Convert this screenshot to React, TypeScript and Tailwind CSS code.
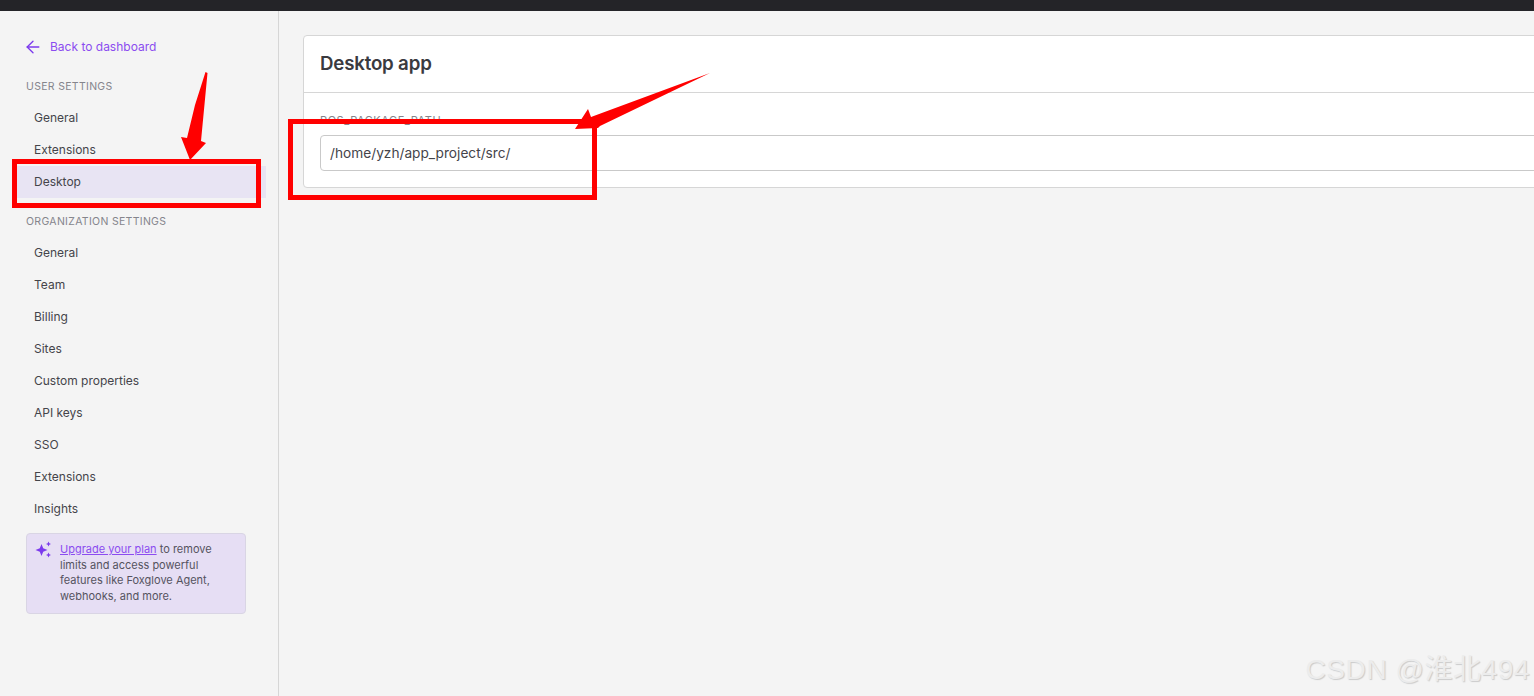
import React from "react";
import { ArrowLeft } from "lucide-react";

const userItems = ["General", "Extensions", "Desktop"];
const orgItems = ["General", "Team", "Billing", "Sites", "Custom properties", "API keys", "SSO", "Extensions", "Insights"];

const NavItem = ({ label, active }: { label: string; active?: boolean }) => (
  <div className={`h-8 flex items-center pl-5 text-[12px] text-[#44444a] ${active ? "bg-[#e8e4f3]" : ""}`}>{label}</div>
);

const SectionLabel = ({ label }: { label: string }) => (
  <div className="px-3 text-[10.5px] leading-4 tracking-[0.03em] uppercase text-[#85858c]">{label}</div>
);

const App = () => {
  return (
    <div className="relative h-screen overflow-hidden flex flex-col bg-[#f4f4f4] font-['Inter',sans-serif]">
      <div className="h-[11px] shrink-0 bg-[#242428]" />
      <div className="flex flex-1 min-h-0">
        <aside className="w-[279px] shrink-0 border-r border-[#d6d6d6] pl-[14px] pr-3 pt-[26px]">
          <div className="flex items-center gap-[7px] h-5 pl-[9px] text-[12px] text-[#8b4cf0]">
            <ArrowLeft size={20} strokeWidth={1.6} className="text-[#7c3aed]" />
            <span>Back to dashboard</span>
          </div>
          <div className="mt-[22px]">
            <SectionLabel label="User settings" />
          </div>
          <div className="mt-[7px]">
            {userItems.map((item) => (
              <NavItem key={item} label={item} active={item === "Desktop"} />
            ))}
          </div>
          <div className="mt-[16px]">
            <SectionLabel label="Organization settings" />
          </div>
          <div className="mt-[7px]">
            {orgItems.map((item) => (
              <NavItem key={item} label={item} />
            ))}
          </div>
          <div className="mt-2 ml-3 w-[220px] h-[81px] rounded border border-[#d9d5e4] bg-[#e6def4] pl-[8px] pr-[30px] pt-2 flex gap-2">
            <svg width="17" height="17" viewBox="0 0 17 17" className="shrink-0 -mt-[1px] text-[#7c3aed]" fill="currentColor">
              <path d="M6.5 3 L8.2 7.3 L12.5 9 L8.2 10.7 L6.5 15 L4.8 10.7 L0.5 9 L4.8 7.3 Z" />
              <path d="M13.5 0.5 L14.3 2.2 L16 3 L14.3 3.8 L13.5 5.5 L12.7 3.8 L11 3 L12.7 2.2 Z" />
              <path d="M13.5 11.5 L14.3 13.2 L16 14 L14.3 14.8 L13.5 16.5 L12.7 14.8 L11 14 L12.7 13.2 Z" />
            </svg>
            <p className="text-[11px] leading-[15.6px] text-[#55535f]">
              <span className="text-[#8b4cf0] underline">Upgrade your plan</span> to remove limits and access powerful features like Foxglove Agent, webhooks, and more.
            </p>
          </div>
        </aside>
        <main className="flex-1 min-w-0 pl-6 pt-6">
          <div className="w-[1400px] h-[153px] bg-white border border-[#d6d6d6] rounded-sm">
            <div className="h-[57px] px-4 flex items-center border-b border-[#d6d6d6]">
              <h1 className="text-[18.7px] font-semibold tracking-[-0.01em] text-[#3a3a3f]">Desktop app</h1>
            </div>
            <div className="px-4 pt-[19px]">
              <div className="text-[11px] leading-4 tracking-[0.05em] text-[#85858c]">ROS_PACKAGE_PATH</div>
              <div className="mt-[7px] h-9 flex items-center px-[9px] border border-[#c9c9c9] rounded-sm text-[13.7px] text-[#44444a]">
                /home/yzh/app_project/src/
              </div>
            </div>
          </div>
        </main>
      </div>

      {/* red annotations on top of the screenshot */}
      <svg className="absolute inset-0 pointer-events-none" width="1534" height="696" viewBox="0 0 1534 696">
        <rect x="14.5" y="161.5" width="244" height="44" fill="none" stroke="#ff0000" strokeWidth="5" />
        <rect x="290.5" y="121.5" width="304" height="76" fill="none" stroke="#ff0000" strokeWidth="5" />
        <polygon points="205.5,72 207.5,73 201,141 206,143 190,160 181,137 187,138 195,105" fill="#ff0000" />
        <polygon points="710,73 600,126 598,128 575,129 588,109 591,117" fill="#ff0000" />
      </svg>

      <div className="absolute right-[4px] bottom-[8px] text-[28px] leading-9 tracking-[0.02em] whitespace-nowrap text-[#ececec] [text-shadow:1px_1px_1px_#cbcbcb] font-['Liberation_Sans','Noto_Sans_CJK_SC',sans-serif]">
        CSDN @淮北494
      </div>
    </div>
  );
};

export default App;
